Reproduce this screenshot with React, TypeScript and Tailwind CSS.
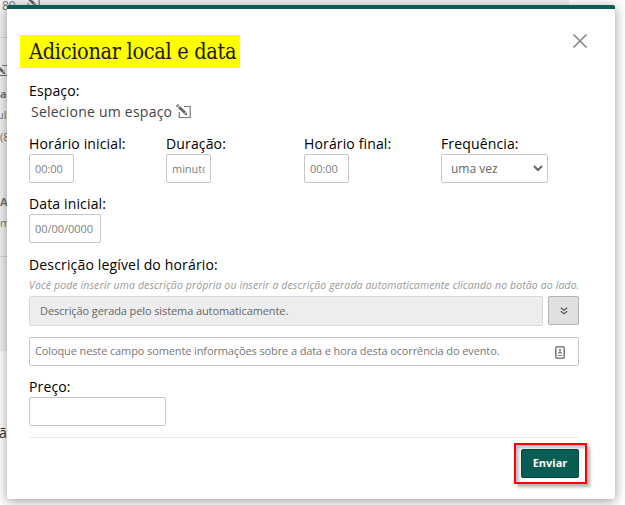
import React from "react";

function EditIcon({ className = "" }: { className?: string }) {
  return (
    <svg className={className} width="15" height="15" viewBox="0 0 15 15" fill="none" stroke="#777">
      <path d="M8 2.5H14.2V13.5H3.2V8" strokeWidth="1.2" />
      <path d="M2.9 2.9L9 8.8" stroke="#666" strokeWidth="2.8" />
      <path d="M8 10.6L10.4 8L11.2 11.2Z" fill="#666" stroke="none" />
      <path d="M0.6 2.6L2.6 0.6" stroke="#666" strokeWidth="1.6" />
    </svg>
  );
}

function Field({ label, placeholder, width, col = "" }: { label: string; placeholder?: string; width: string; col?: string }) {
  return (
    <div className={`flex flex-col ${col}`}>
      <label className="h-5 text-[14px] leading-5 tracking-[0.14px] whitespace-nowrap text-black">{label}</label>
      <input
        placeholder={placeholder}
        className={`h-[29px] rounded-[2px] border border-[#c6c6c6] bg-white px-[5px] pb-px text-[11px] tracking-[-0.05px] placeholder:text-[#808080] ${width}`}
      />
    </div>
  );
}

function PageBehind() {
  return (
    <div className="h-[351px] w-[569px] overflow-hidden bg-[#f2f2f2] text-[11px] leading-4 whitespace-nowrap text-[#777]">
      <div className="flex h-[38px] items-start gap-[9px] border-b border-[#d9d9d9] pl-[2px]">
        <span className="-mt-[2px] text-[12px]">89</span>
        <EditIcon className="-mt-[5px]" />
      </div>
      <div className="mt-[25px] h-[13px] w-[7px] overflow-hidden border-b border-[#666]">
        <EditIcon className="-ml-[6px]" />
      </div>
      <div className="mt-[10px] font-bold">a</div>
      <div className="mt-[5px] -ml-[3px]">ult</div>
      <div className="mt-[6px]">(8</div>
      <div className="mt-[49px] font-bold">A</div>
      <div className="mt-[5px]">m</div>
      <div className="mt-[25px] border-t border-[#d9d9d9]" />
    </div>
  );
}

export default function App() {
  return (
    <div className="relative h-[505px] w-[625px] overflow-hidden bg-white font-['Open_Sans',sans-serif]">
      <PageBehind />
      <div className="mt-[72px] -ml-px text-[14px] leading-5 text-[#333]">ã</div>

      <div className="absolute top-[5px] left-[7px] flex h-[494px] w-[608px] flex-col rounded-[2px] border-t-4 border-[#085e55] bg-white pr-9 pl-[22px] shadow-[0_2px_12px_rgba(0,0,0,0.4)]">
        <div className="mt-[26px] flex h-[33px] justify-between">
          <h1 className="-ml-[9px] h-[33px] w-[220px] bg-[#ffff00] pl-[9px] font-['DejaVu_Serif_Condensed','DejaVu_Serif',serif] text-[21.5px] leading-[33px] tracking-[-0.3px] whitespace-nowrap text-[#1a1a00]">
            Adicionar local e data
          </h1>
          <button aria-label="Fechar" className="mt-[-1px] mr-[-8px] h-[14px] w-[14px]">
            <svg width="14" height="14" viewBox="0 0 14 14" stroke="#8e9499" strokeWidth="1.8">
              <path d="M0.5 0.5L13.5 13.5M13.5 0.5L0.5 13.5" />
            </svg>
          </button>
        </div>

        <div className="mt-[13px] h-5 text-[14px] leading-5 tracking-[0.14px] text-black">Espaço:</div>
        <div className="mt-px flex h-5 items-center gap-1 pl-[2px] text-[14px] leading-5 text-[#444]">
          <span className="tracking-[0.23px]">Selecione um espaço</span>
          <EditIcon className="-mt-[2px]" />
        </div>

        <div className="mt-3 flex">
          <Field label="Horário inicial:" placeholder="00:00" width="w-[45px]" col="w-[137px]" />
          <Field label="Duração:" placeholder="minutos" width="w-[45px]" col="w-[138px]" />
          <Field label="Horário final:" placeholder="00:00" width="w-[45px]" col="w-[137px]" />
          <div className="flex flex-col">
            <label className="h-5 text-[14px] leading-5 tracking-[0.14px]">Frequência:</label>
            <div className="flex h-[29px] w-[107px] items-center justify-between rounded-[2px] border border-[#c6c6c6] pr-1 pl-[9px] text-[12px] text-[#666]">
              <span>uma vez</span>
              <svg width="10" height="7" viewBox="0 0 10 7" fill="none" stroke="#666" strokeWidth="2">
                <path d="M1 1L5 5L9 1" />
              </svg>
            </div>
          </div>
        </div>

        <div className="mt-[11px]">
          <Field label="Data inicial:" placeholder="00/00/0000" width="w-[72px]" />
        </div>

        <div className="mt-3 h-5 text-[14px] leading-5 tracking-[0.16px] text-black">Descrição legível do horário:</div>
        <p className="mt-[2px] h-4 text-[10.5px] leading-4 tracking-[0.115px] whitespace-nowrap text-[#999] italic">
          Você pode inserir uma descrição própria ou inserir a descrição gerada automaticamente clicando no botão ao lado.
        </p>
        <div className="mt-[3px] flex gap-[5px]">
          <div className="h-[30px] w-[514px] rounded-[2px] border border-[#d9d9d9] bg-[#ededed] pl-[10px] text-[11px] leading-7 tracking-[-0.1px] text-[#666]">
            Descrição gerada pelo sistema automaticamente.
          </div>
          <button aria-label="Gerar descrição" className="flex h-[29px] w-[31px] items-center justify-center rounded-[2px] border border-[#b3b3b3] bg-[#e0e0e0]">
            <svg width="8" height="8" viewBox="0 0 8 8" fill="none" stroke="#555" strokeWidth="1.2">
              <path d="M0.8 0.8L4 3.2L7.2 0.8M0.8 4.3L4 6.7L7.2 4.3" />
            </svg>
          </button>
        </div>
        <div className="mt-[11px] flex h-[29px] items-center justify-between rounded-[2px] border border-[#c6c6c6] pr-[13px] pl-[5px] text-[11px] text-[#777]">
          <span className="tracking-[-0.115px]">Coloque neste campo somente informações sobre a data e hora desta ocorrência do evento.</span>
          <svg className="mt-px" width="10" height="13" viewBox="0 0 10 13" fill="none" stroke="#808080">
            <rect x="0.8" y="0.8" width="8.4" height="11.4" rx="1" strokeWidth="1.6" />
            <path d="M3 9.5H7" />
            <path d="M3 7.6V6.4Q3 5.8 5 5.8Q7 5.8 7 6.4V7.6Z" fill="#808080" stroke="none" />
            <circle cx="5" cy="4.2" r="1.2" fill="#808080" stroke="none" />
          </svg>
        </div>

        <div className="mt-[11px]">
          <Field label="Preço:" width="w-[137px]" />
        </div>
        <div className="mt-[11px] border-t border-[#ebebeb]" />
        <div className="mt-[5px] -mr-2 flex h-[41px] w-[73px] items-center justify-center self-end border-2 border-[#ff0000] shadow-[3px_3px_3px_rgba(0,0,0,0.3),inset_3px_3px_3px_rgba(0,0,0,0.25)]">
          <button className="-mt-px -ml-px h-[29px] w-[58px] rounded-[2px] border border-[#05433d] bg-[#085e55] text-[11px] font-bold text-white">Enviar</button>
        </div>
      </div>
    </div>
  );
}
